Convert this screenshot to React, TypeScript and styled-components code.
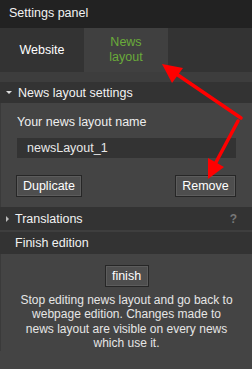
import React from 'react';
import styled, { createGlobalStyle } from 'styled-components';

const GlobalStyle = createGlobalStyle`
	html, body {
		margin: 0;
		padding: 0;
		background: #444;
	}
`;

const Panel = styled.div`
	position: relative;
	width: 252px;
	height: 369px;
	background: #444;
	font-family: 'Liberation Sans', Arial, sans-serif;
	font-size: 12.5px;
	color: #eee;
	display: flex;
	flex-direction: column;
	overflow: hidden;
`;

const TitleBar = styled.div`
	height: 28px;
	line-height: 27px;
	padding-left: 9px;
	background: #222;
	color: #f2f2f2;
`;

const Tabs = styled.div`
	display: flex;
	height: 44px;
	background: #333;
`;

const Tab = styled.div<{ $active?: boolean }>`
	width: 84px;
	display: flex;
	align-items: center;
	justify-content: center;
	text-align: center;
	line-height: 15px;
	background: ${p => (p.$active ? '#404040' : 'transparent')};
	color: ${p => (p.$active ? '#6aab3a' : '#fff')};
`;

const Spacer = styled.div`
	height: 10px;
	background: #3d3d3d;
`;

const SectionHeader = styled.div<{ $h: number }>`
	height: ${p => p.$h}px;
	display: flex;
	align-items: center;
	background: #333;
	padding: 0 15px 0 6px;
	color: #f2f2f2;
`;

const Caret = styled.span<{ $open?: boolean }>`
	display: inline-block;
	width: 0;
	height: 0;
	margin-right: 6px;
	${p =>
		p.$open
			? 'border-left: 3px solid transparent; border-right: 3px solid transparent; border-top: 3px solid #ddd;'
			: 'border-top: 3px solid transparent; border-bottom: 3px solid transparent; border-left: 3px solid #bbb;'}
`;

const Plain = styled.span`
	margin-left: 9px;
`;

const Help = styled.span`
	margin-left: auto;
	color: #777;
	font-weight: bold;
	font-size: 12px;
`;

const Divider = styled.div`
	height: 2px;
	background: #3e3e3e;
`;

const Body = styled.div<{ $center?: boolean }>`
	background: #444;
	padding: ${p => (p.$center ? '11px 14px 0' : '12px 16px 10px 15px')};
	text-align: ${p => (p.$center ? 'center' : 'left')};
	border-left: 1px solid #3a3a3a;
`;

const Label = styled.div`
	line-height: 15px;
	margin-left: 1px;
`;

const NameInput = styled.div`
	margin: 8px 0 0 1px;
	height: 20px;
	line-height: 20px;
	background: #333;
	padding-left: 10px;
	color: #e8e8e8;
`;

const ButtonRow = styled.div`
	display: flex;
	justify-content: space-between;
	margin-top: 17px;
`;

const Button = styled.div<{ $w: number }>`
	box-sizing: border-box;
	width: ${p => p.$w}px;
	height: 22px;
	line-height: 20px;
	text-align: center;
	background: #4e4e4e;
	border: 1px solid #262626;
	box-shadow: inset 0 0 0 1px #5c5c5c;
	color: #fff;
	display: inline-block;
`;

const Note = styled.p`
	margin: 6px 0 0;
	padding: 0 4px;
	font-size: 12px;
	line-height: 14.4px;
	color: #e6e6e6;
`;

const Arrows = styled.svg`
	position: absolute;
	left: 0;
	top: 0;
	pointer-events: none;
`;

const App = () => (
	<>
		<GlobalStyle />
		<Panel>
			<TitleBar>Settings panel</TitleBar>
			<Tabs>
				<Tab>Website</Tab>
				<Tab $active>News<br />layout</Tab>
			</Tabs>
			<Spacer />
			<SectionHeader $h={21}>
				<Caret $open />
				News layout settings
			</SectionHeader>
			<Body>
				<Label>Your news layout name</Label>
				<NameInput>newsLayout_1</NameInput>
				<ButtonRow>
					<Button $w={66}>Duplicate</Button>
					<Button $w={61}>Remove</Button>
				</ButtonRow>
			</Body>
			<SectionHeader $h={23}>
				<Caret />
				Translations
				<Help>?</Help>
			</SectionHeader>
			<Divider />
			<SectionHeader $h={22}>
				<Plain>Finish edition</Plain>
			</SectionHeader>
			<Body $center>
				<Button $w={44}>finish</Button>
				<Note>
					Stop editing news layout and go back to webpage edition. Changes made to news layout are visible on every news which use it.
				</Note>
			</Body>
			<Arrows width="252" height="369" viewBox="0 0 252 369">
				<g stroke="#f00" strokeWidth="3.5" strokeLinecap="round" fill="none">
					<line x1="241" y1="118" x2="172" y2="71" />
					<line x1="238" y1="121" x2="214" y2="166" />
				</g>
				<g fill="#f00">
					<polygon points="162,64 183,68 172,83" />
					<polygon points="208,179 208,158 224,167" />
				</g>
			</Arrows>
		</Panel>
	</>
);

export default App;
